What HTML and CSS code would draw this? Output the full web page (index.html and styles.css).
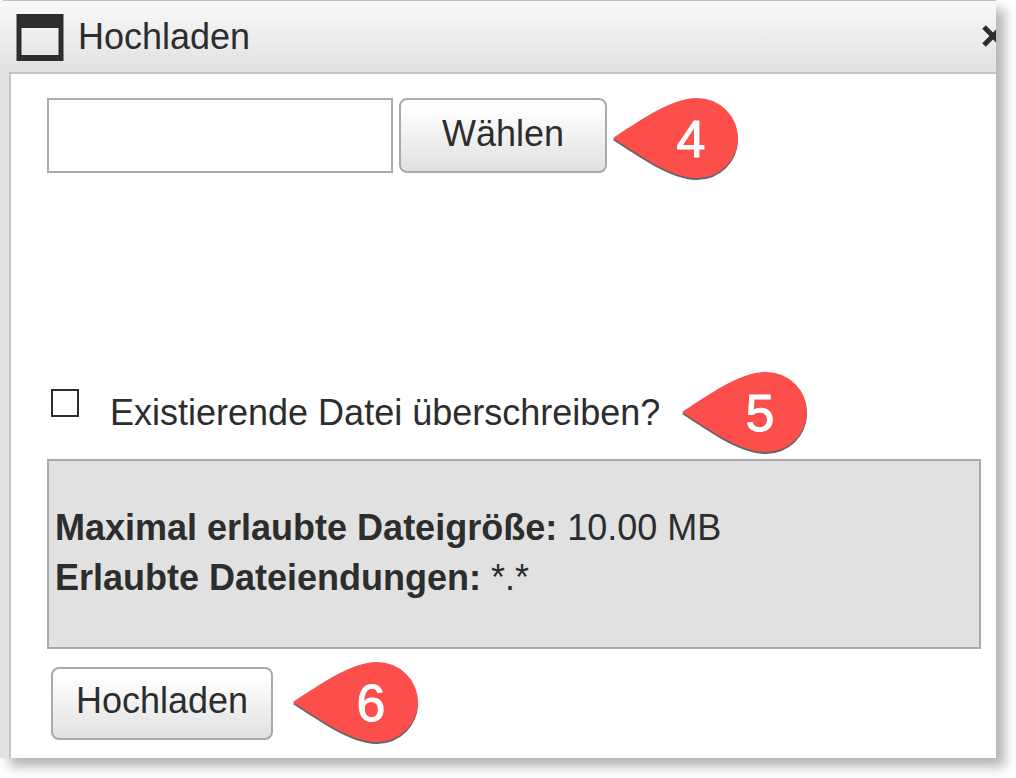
FILE: index.html
```html
<!DOCTYPE html>
<html lang="de">
  <head>
    <meta charset="utf-8">
    <title>Hochladen</title>
    <link rel="stylesheet" href="styles.css">
  </head>
  <body>
    <svg class="defs" aria-hidden="true">
      <symbol id="drop" viewBox="0 0 126 82">
        <path fill="#666" d="M0 42C28 24 58 2 84 2A41 40 0 0 1 84 82C58 82 28 60 0 42Z"/>
        <path fill="#fc4e4a" d="M0 40C28 22 58 0 84 0A41 40 0 0 1 84 80C58 80 28 58 0 40Z"/>
      </symbol>
    </svg>
    <form class="dialog">
      <div class="titlebar">
        <svg class="icon" viewBox="0 0 48 48">
          <path fill="#2d2d2d" fill-rule="evenodd" d="M0.5 1H47.5V48H0.5ZM5.5 15V42H42.5V15Z"/>
        </svg>
        <h1 class="title">Hochladen</h1>
        <button class="close" type="button" aria-label="Schließen">
          <svg viewBox="0 0 24 24"><path d="M2 2L20 20M20 2L2 20" stroke="#2d2d2d" stroke-width="5"/></svg>
        </button>
      </div>
      <div class="content">
        <div class="row choose">
          <input class="file" type="text" aria-label="Datei">
          <button class="button" type="button">Wählen</button>
          <svg class="marker" viewBox="0 0 126 82"><use href="#drop"/><text x="78" y="59">4</text></svg>
        </div>
        <div class="row overwrite">
          <input class="check" type="checkbox" id="overwrite">
          <label for="overwrite">Existierende Datei überschreiben?</label>
          <svg class="marker" viewBox="0 0 126 82"><use href="#drop"/><text x="78" y="59">5</text></svg>
        </div>
        <div class="info">
          <b>Maximal erlaubte Dateigröße:</b> 10.00 MB<br>
          <b>Erlaubte Dateiendungen:</b> *.*
        </div>
        <div class="row submit">
          <button class="button" type="button">Hochladen</button>
          <svg class="marker" viewBox="0 0 126 82"><use href="#drop"/><text x="78" y="59">6</text></svg>
        </div>
      </div>
    </form>
  </body>
</html>
```
FILE: styles.css
```css
* {
  box-sizing: border-box;
}
body {
  margin: 0;
  background: #fff;
  color: #2d2d2d;
  font: 36px/42px "Liberation Sans", Arial, sans-serif;
}
.defs {
  display: none;
}
.dialog {
  margin: 0 20px 20px 0;
  border-top: 1px solid #c0c0c0;
  border-top-left-radius: 5px;
  background: #e1e1e1;
  box-shadow: 9px 9px 12px rgba(0, 0, 0, 0.29);
}
.titlebar {
  display: flex;
  align-items: center;
  gap: 14px;
  height: 71px;
  padding-left: 16px;
  overflow: hidden;
  border-top-left-radius: 4px;
  background: linear-gradient(#f9f9f9, #e1e1e1);
}
.icon {
  flex: none;
  width: 48px;
  height: 48px;
}
.title {
  flex: 1;
  margin: 0;
  font-size: 36px;
  font-weight: normal;
}
.close {
  flex: none;
  width: 24px;
  height: 24px;
  margin-right: -10px;
  padding: 0;
  border: 0;
  background: none;
}
.close svg {
  display: block;
}
.content {
  margin-left: 9px;
  padding: 24px 15px 14px 36px;
  border: solid #c4c4c4;
  border-width: 2px 0 0 2px;
  background: #fff;
}
.row {
  display: flex;
  align-items: center;
}
.choose {
  align-items: flex-start;
  gap: 6px;
  margin-bottom: 192px;
}
.file {
  width: 346px;
  height: 75px;
  padding: 0 8px;
  border: 2px solid #aaa;
  font: inherit;
}
.button {
  height: 75px;
  padding: 0 41px 4px;
  border: 2px solid #aaa;
  border-radius: 8px;
  background: linear-gradient(#fff 10%, #e0e0e0);
  color: inherit;
  font: inherit;
}
.marker {
  flex: none;
  width: 126px;
  height: 82px;
}
.marker text {
  fill: #fff;
  stroke: #fff;
  stroke-width: 1px;
  font-size: 52px;
  text-anchor: middle;
}
.overwrite {
  margin-bottom: 5px;
}
.overwrite .marker {
  margin-left: 22px;
}
.check {
  appearance: none;
  width: 28px;
  height: 28px;
  margin: 0 31px 20px 4px;
  border: 2px solid #2d2d2d;
  background: #fff;
}
.info {
  padding: 42px 6px 44px;
  border: 2px solid #aaa;
  background: #e1e1e1;
  line-height: 50px;
}
.submit {
  gap: 20px;
  margin-top: 13px;
  padding-left: 4px;
}
.submit .button {
  height: 73px;
  padding: 0 23px 4px;
}
```
